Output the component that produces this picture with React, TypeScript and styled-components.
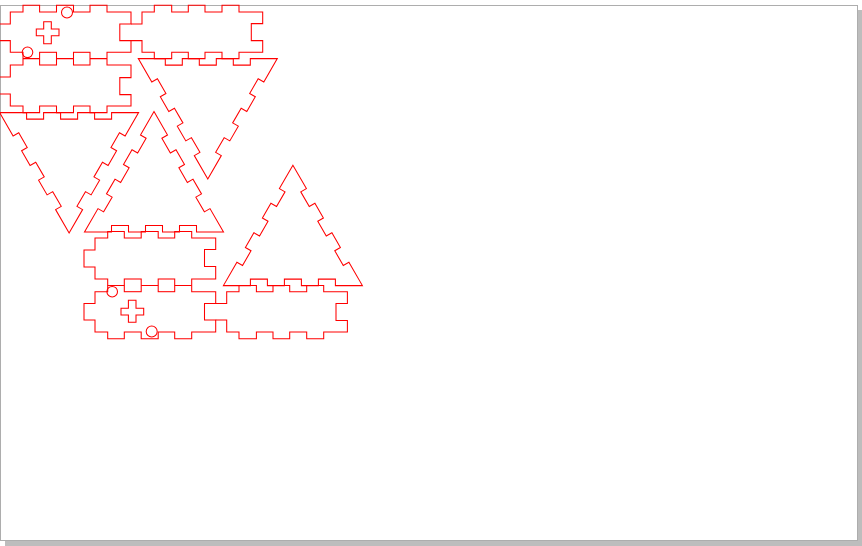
import React from 'react'
import styled, { createGlobalStyle } from 'styled-components'

type Point = [number, number]

const GlobalStyles = createGlobalStyle`
  html,
  body {
    margin: 0;
    padding: 0;
    background: #fff;
    overflow: hidden;
  }
`

const Page = styled.main`
  box-sizing: border-box;
  width: 862px;
  height: 546px;
  padding-top: 5px;
`

const Sheet = styled.div`
  box-sizing: border-box;
  width: 858px;
  height: 536px;
  background: #fff;
  border: 1px solid #adadad;
  box-shadow: 5px 5px 0 #bdbdbd;
`

const Drawing = styled.svg`
  display: block;
  width: 856px;
  height: 534px;
  overflow: visible;
`

const CutLines = styled.g`
  fill: none;
  stroke: #ff0000;
  stroke-width: 1.05;
`

const TOOTH_STEPS = [27, 17, 17, 17, 17, 17, 27]
const TOOTH_DEPTH = 6.5

// one finger-jointed edge; the fingers always go towards `inner`
const toothedEdge = (from: Point, to: Point, inner: Point): Point[] => {
  const total = TOOTH_STEPS.reduce((sum, step) => sum + step, 0)
  const dx = (to[0] - from[0]) / total
  const dy = (to[1] - from[1]) / total
  const length = Math.hypot(dx, dy)
  let nx = -dy / length
  let ny = dx / length
  if (nx * (inner[0] - from[0]) + ny * (inner[1] - from[1]) < 0) {
    nx = -nx
    ny = -ny
  }

  const points: Point[] = []
  let x = from[0]
  let y = from[1]
  TOOTH_STEPS.forEach((step, i) => {
    x += dx * step
    y += dy * step
    points.push([x, y])
    if (i < TOOTH_STEPS.length - 1) {
      const sign = i % 2 === 0 ? 1 : -1
      x += nx * TOOTH_DEPTH * sign
      y += ny * TOOTH_DEPTH * sign
      points.push([x, y])
    }
  })
  return points
}

const trianglePath = (a: Point, b: Point, c: Point) => {
  const points = [
    ...toothedEdge(a, b, c),
    ...toothedEdge(b, c, a),
    ...toothedEdge(c, a, b),
  ]
  return `M${a[0]} ${a[1]} ` + points.map(p => `L${p[0].toFixed(2)} ${p[1].toFixed(2)}`).join(' ') + ' Z'
}

const TRIANGLES: [Point, Point, Point][] = [
  [[138.3, 58.6], [277.3, 58.6], [207.8, 179]],
  [[-0.4, 112.6], [138.6, 112.6], [69.1, 233]],
  [[84.5, 232], [223.5, 232], [154, 111.6]],
  [[223.4, 285.6], [362.4, 285.6], [292.9, 165.2]],
]

// the pair of long sides with the cross and pin holes, plus the lid next to it
const SIDE_PANEL =
  'M-0.7 24 H10.3 V12 H23 V5.2 H39.6 V12 H56.5 V5.2 H73.5 V12 H90 V5.2 H107 V12 H131 V24 H119.8 V40.6 H131 V52.3 H107 V65 H131 V77.6 H119.8 V94.6 H131 V106 H107 V112.6 H90 V106 H73.5 V112.6 H56.5 V106 H39.6 V112.6 H23 V106 H10.3 V94 H-0.7 V77 H10.3 V65 H23 V52.3 H10.3 V40.6 H-0.7 Z'
const LID_PANEL =
  'M131 24 H142 V12 H154.3 V5.2 H171.7 V12 H188.3 V5.2 H205 V12 H222 V5.2 H239 V12 H262.7 V23.6 H251.3 V40.6 H262.7 V52.3 H239 V58.6 H222 V52.3 H205 V58.6 H188.3 V52.3 H171.7 V58.6 H154.3 V52.3 H142 V40.6 H131'
const FOLD_LINE = 'M23 58.6 H39.6 M56.5 58.6 H73.5 M90 58.6 H107'
const CROSS_HOLE = 'M36.3 29 H43.7 V21.7 H51.3 V29 H59 V35.7 H51.3 V43.7 H43.7 V35.7 H36.3 Z'

const PanelSet: React.FC<{ transform?: string }> = ({ transform }) => (
  <g transform={transform}>
    <path d={SIDE_PANEL} />
    <path d={LID_PANEL} />
    <path d={FOLD_LINE} />
    <path d={CROSS_HOLE} />
    <rect x={39.6} y={52.3} width={16.9} height={12.7} />
    <rect x={73.5} y={52.3} width={16.5} height={12.7} />
    <circle cx={67} cy={12.5} r={5.5} />
    <circle cx={27.5} cy={52.3} r={5.3} />
  </g>
)

const App: React.FC = () => (
  <Page>
    <GlobalStyles />
    <Sheet>
      <Drawing viewBox="1 6 856 534">
        <CutLines>
          <PanelSet />
          <PanelSet transform="translate(84.7 344) scale(1 -1)" />
          {TRIANGLES.map(([a, b, c], i) => (
            <path key={i} d={trianglePath(a, b, c)} />
          ))}
        </CutLines>
      </Drawing>
    </Sheet>
  </Page>
)

export default App
